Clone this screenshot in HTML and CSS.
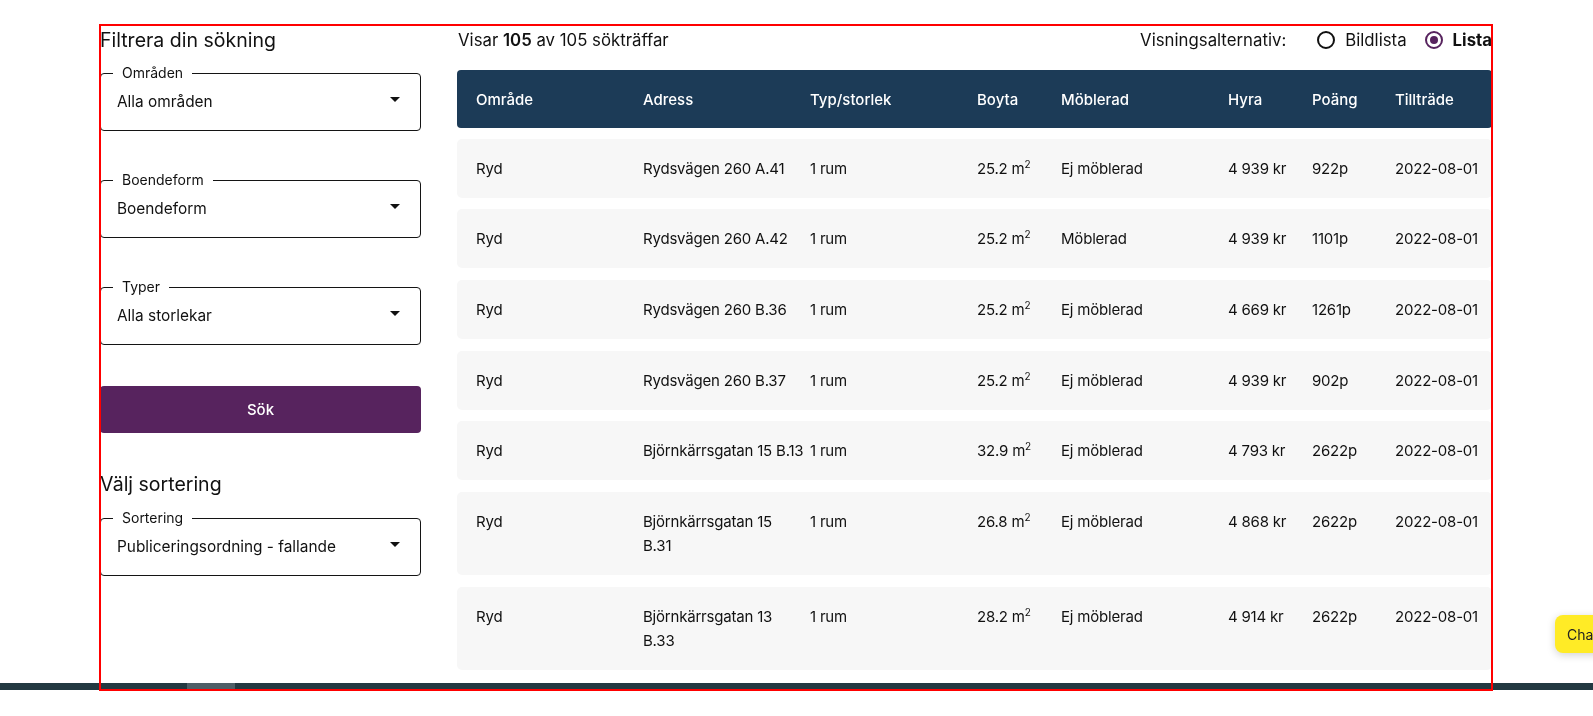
FILE: index.html
```html
<!DOCTYPE html>
<html lang="sv">
<head>
<meta charset="utf-8">
<title>Lediga bostäder</title>
<link rel="stylesheet" href="styles.css">
</head>
<body>
<div class="frame">
  <aside class="sidebar">
    <h2 class="side-title">Filtrera din sökning</h2>
    <fieldset class="select">
      <legend>Områden</legend>
      <div class="select-value"><span>Alla områden</span><svg class="caret" viewBox="0 0 10 5"><path d="M0 0l5 5 5-5z"/></svg></div>
    </fieldset>
    <fieldset class="select">
      <legend>Boendeform</legend>
      <div class="select-value"><span>Boendeform</span><svg class="caret" viewBox="0 0 10 5"><path d="M0 0l5 5 5-5z"/></svg></div>
    </fieldset>
    <fieldset class="select">
      <legend>Typer</legend>
      <div class="select-value"><span>Alla storlekar</span><svg class="caret" viewBox="0 0 10 5"><path d="M0 0l5 5 5-5z"/></svg></div>
    </fieldset>
    <button class="search-btn" type="button">Sök</button>
    <h2 class="side-title sort-title">Välj sortering</h2>
    <fieldset class="select">
      <legend>Sortering</legend>
      <div class="select-value"><span>Publiceringsordning - fallande</span><svg class="caret" viewBox="0 0 10 5"><path d="M0 0l5 5 5-5z"/></svg></div>
    </fieldset>
  </aside>

  <main class="results">
    <div class="topbar">
      <p class="count">Visar <b>105</b> av 105 sökträffar</p>
      <div class="view-opts">
        <span class="view-label">Visningsalternativ:</span>
        <label class="radio"><span class="ring"></span>Bildlista</label>
        <label class="radio checked"><span class="ring"></span><b>Lista</b></label>
      </div>
    </div>

    <div class="table">
      <div class="cols thead">
        <span>Område</span><span>Adress</span><span>Typ/storlek</span><span>Boyta</span><span>Möblerad</span><span>Hyra</span><span>Poäng</span><span>Tillträde</span>
      </div>
      <div class="cols trow">
        <span>Ryd</span><span class="addr">Rydsvägen 260 A.41</span><span>1 rum</span><span>25.2 m<sup>2</sup></span><span>Ej möblerad</span><span>4 939 kr</span><span>922p</span><span>2022-08-01</span>
      </div>
      <div class="cols trow">
        <span>Ryd</span><span class="addr">Rydsvägen 260 A.42</span><span>1 rum</span><span>25.2 m<sup>2</sup></span><span>Möblerad</span><span>4 939 kr</span><span>1101p</span><span>2022-08-01</span>
      </div>
      <div class="cols trow">
        <span>Ryd</span><span class="addr">Rydsvägen 260 B.36</span><span>1 rum</span><span>25.2 m<sup>2</sup></span><span>Ej möblerad</span><span>4 669 kr</span><span>1261p</span><span>2022-08-01</span>
      </div>
      <div class="cols trow">
        <span>Ryd</span><span class="addr">Rydsvägen 260 B.37</span><span>1 rum</span><span>25.2 m<sup>2</sup></span><span>Ej möblerad</span><span>4 939 kr</span><span>902p</span><span>2022-08-01</span>
      </div>
      <div class="cols trow">
        <span>Ryd</span><span class="addr nowrap">Björnkärrsgatan 15 B.13</span><span>1 rum</span><span>32.9 m<sup>2</sup></span><span>Ej möblerad</span><span>4 793 kr</span><span>2622p</span><span>2022-08-01</span>
      </div>
      <div class="cols trow">
        <span>Ryd</span><span class="addr">Björnkärrsgatan 15 B.31</span><span>1 rum</span><span>26.8 m<sup>2</sup></span><span>Ej möblerad</span><span>4 868 kr</span><span>2622p</span><span>2022-08-01</span>
      </div>
      <div class="cols trow">
        <span>Ryd</span><span class="addr">Björnkärrsgatan 13 B.33</span><span>1 rum</span><span>28.2 m<sup>2</sup></span><span>Ej möblerad</span><span>4 914 kr</span><span>2622p</span><span>2022-08-01</span>
      </div>
    </div>
  </main>
</div>

<div class="scrollbar"><div class="thumb"></div></div>
<button class="chat" type="button">Chat</button>
</body>
</html>
```

FILE: styles.css
```css
html, body {
  margin: 0;
  padding: 0;
  background: #fff;
  overflow: hidden;
}
body {
  font-family: Inter, "Liberation Sans", Arial, sans-serif;
  color: #111;
  font-size: 15px;
  height: 716px;
}

.frame {
  margin: 25px 0 0 100px;
  width: 1392px;
  height: 665px;
  display: flex;
  gap: 36px;
  outline: 2px solid #ff0000;
  outline-offset: -1px;
  position: relative;
  z-index: 2;
}

/* ---------- sidebar ---------- */
.sidebar {
  width: 321px;
  flex-shrink: 0;
  display: flex;
  flex-direction: column;
}
.side-title {
  margin: 2px 0 13px;
  font-size: 19.5px;
  line-height: 26px;
  font-weight: 400;
}
.sort-title {
  margin: 38px 0 14px;
}
.select {
  margin: 0 0 42px;
  padding: 0 20px 0 16px;
  border: 1px solid #141414;
  border-radius: 4px;
  min-width: 0;
}
.select legend {
  margin-left: -4px;
  padding: 0 9px;
  font-size: 14px;
  line-height: 14px;
}
.select-value {
  display: flex;
  align-items: center;
  justify-content: space-between;
  height: 50px;
  padding-bottom: 6px;
  box-sizing: border-box;
  font-size: 15.4px;
  line-height: 22px;
}
.caret {
  width: 10px;
  height: 5px;
  fill: #111;
  margin-bottom: 5px;
}
.search-btn {
  height: 47px;
  width: 100%;
  border: 0;
  border-radius: 4px;
  background: #57235e;
  color: #fff;
  font-family: inherit;
  font-size: 15px;
  font-weight: 500;
  margin-top: -1px;
}

/* ---------- results ---------- */
.results {
  flex: 1;
  min-width: 0;
  display: flex;
  flex-direction: column;
}
.topbar {
  display: flex;
  justify-content: space-between;
  align-items: center;
  height: 26px;
  margin: 2px 0 17px;
  font-size: 16.8px;
}
.count {
  margin: 0 0 0 1px;
}
.count b {
  font-weight: 600;
}
.view-opts {
  display: flex;
  align-items: center;
}
.view-label {
  margin-right: 31px;
}
.radio {
  display: flex;
  align-items: center;
  gap: 10px;
}
.radio + .radio {
  margin-left: 18px;
}
.ring {
  width: 18px;
  height: 18px;
  box-sizing: border-box;
  border: 2px solid #111;
  border-radius: 50%;
  display: flex;
  align-items: center;
  justify-content: center;
}
.radio.checked .ring {
  border-color: #57235e;
}
.radio.checked .ring::after {
  content: "";
  width: 8px;
  height: 8px;
  border-radius: 50%;
  background: #57235e;
}
.radio b {
  font-weight: 700;
}

.table {
  display: flex;
  flex-direction: column;
  gap: 11.7px;
}
.cols {
  display: grid;
  grid-template-columns: 167px 167px 167px 84px 167px 84px 83px 1fr;
  padding-left: 19px;
  border-radius: 4px;
}
.thead {
  height: 58px;
  align-items: center;
  background: #1c3b57;
  color: #fff;
  font-weight: 500;
  margin-bottom: -1px;
}
.trow {
  padding-top: 18px;
  padding-bottom: 17px;
  line-height: 24px;
  letter-spacing: -0.2px;
  background: #f7f7f7;
  border-radius: 5px;
}
.addr {
  padding-right: 10px;
}
.nowrap {
  white-space: nowrap;
}
sup {
  font-size: 10px;
  line-height: 0;
  vertical-align: 6px;
}

/* ---------- overlays ---------- */
.scrollbar {
  position: fixed;
  left: 0;
  right: 0;
  top: 683px;
  height: 7px;
  background: #233941;
  z-index: 1;
}
.thumb {
  margin-left: 187px;
  width: 48px;
  height: 100%;
  background: #4e5f67;
}
.chat {
  position: fixed;
  left: 1555px;
  top: 615px;
  width: 70px;
  height: 38px;
  padding: 0 0 0 12px;
  text-align: left;
  border: 0;
  border-radius: 8px;
  background: #ffeb26;
  color: #222;
  font-family: inherit;
  font-size: 14px;
  box-shadow: 0 2px 8px rgba(0, 0, 0, 0.18);
  z-index: 3;
}
```
